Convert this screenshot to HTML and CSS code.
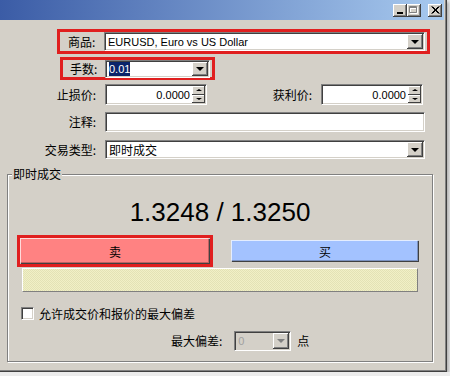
FILE: index.html
```html
<!DOCTYPE html>
<html lang="zh-CN">
	<head>
		<meta charset="UTF-8" />
		<title>新订单</title>
		<link rel="stylesheet" href="styles.css">
	</head>
	<body>
		<div class="window">
			<div class="titlebar">
				<span class="cap-btn">
					<svg width="8" height="8" viewBox="0 0 8 8"><rect x="1" y="6" width="6" height="2" fill="#000"/></svg>
				</span>
				<span class="cap-btn">
					<svg width="10" height="9" viewBox="0 0 10 9"><path d="M1.5 1.5h7v6h-7z M1.5 2.5h7" fill="none" stroke="#fff"/><path d="M0.5 0.5h7v6h-7z M0.5 1.5h7" fill="none" stroke="#808080"/></svg>
				</span>
				<span class="cap-btn close">
					<svg width="9" height="8" viewBox="0 0 9 8"><path d="M0.5 0.5l7 7M1.5 0.5l7 7M7.5 0.5l-7 7M8.5 0.5l-7 7" stroke="#000"/></svg>
				</span>
			</div>

			<div class="client">
				<div class="mark mark-symbol">
					<label class="lbl-inline">商品:</label>
					<div class="field combo symbol-combo">
						<span class="value latin">EURUSD, Euro vs US Dollar</span>
						<span class="drop"><i class="arrow"></i></span>
					</div>
				</div>

				<div class="mark mark-lots">
					<label class="lbl-inline">手数:</label>
					<div class="field combo lots-combo">
						<span class="value latin"><span class="selected">0.01</span></span>
						<span class="drop"><i class="arrow"></i></span>
					</div>
				</div>

				<div class="row row-prices">
					<label class="lbl">止损价:</label>
					<div class="field spin-field">
						<span class="value latin num">0.0000</span>
						<span class="spin"><span class="spin-up"><i class="arrow up"></i></span><span class="spin-down"><i class="arrow small"></i></span></span>
					</div>
					<label class="lbl lbl-tp">获利价:</label>
					<div class="field spin-field">
						<span class="value latin num">0.0000</span>
						<span class="spin"><span class="spin-up"><i class="arrow up"></i></span><span class="spin-down"><i class="arrow small"></i></span></span>
					</div>
				</div>

				<div class="row row-comment">
					<label class="lbl">注释:</label>
					<div class="field full"></div>
				</div>

				<div class="row row-type">
					<label class="lbl">交易类型:</label>
					<div class="field combo full">
						<span class="value">即时成交</span>
						<span class="drop"><i class="arrow"></i></span>
					</div>
				</div>

				<fieldset class="group">
					<legend>即时成交</legend>
					<div class="price">1.3248 / 1.3250</div>

					<div class="trade">
						<div class="mark mark-sell">
							<button class="btn sell">卖</button>
						</div>
						<button class="btn buy">买</button>
					</div>

					<div class="status-bar"></div>

					<div class="check-row">
						<span class="checkbox"></span>
						<span>允许成交价和报价的最大偏差</span>
					</div>

					<div class="dev-row">
						<label>最大偏差:</label>
						<div class="field combo disabled dev-combo">
							<span class="value latin">0</span>
							<span class="drop"><i class="arrow"></i></span>
						</div>
						<span class="unit">点</span>
					</div>
				</fieldset>
			</div>
		</div>
	</body>
</html>
```

FILE: styles.css
```css
* {
	box-sizing: border-box;
}
body {
	margin: 0;
	background: #ececec;
	font-family: "Noto Sans CJK SC", sans-serif;
	font-size: 12px;
	color: #000;
}
.window {
	width: 447px;
	height: 372px;
	padding-right: 3px;
	background: #d4d0c8;
	box-shadow: inset -1px -1px #404040, inset -2px -2px #808080, 2px 2px 3px rgba(0, 0, 0, 0.25);
}
.titlebar {
	height: 20px;
	display: flex;
	align-items: center;
	justify-content: flex-end;
	padding-right: 2px;
	background: linear-gradient(to right, #3b5ca6, #a8caef);
}
.cap-btn {
	width: 14px;
	height: 13px;
	display: flex;
	align-items: center;
	justify-content: center;
	background: #d4d0c8;
	box-shadow: inset -1px -1px #404040, inset 1px 1px #fff, inset -2px -2px #808080;
}
.cap-btn.close {
	margin-left: 7px;
}

/* form rows */
.client {
	padding-top: 9px;
}
.mark {
	border: 3px solid #e01f1f;
	display: flex;
	align-items: center;
}
.mark-symbol {
	margin-left: 57px;
	width: 373px;
	height: 25px;
	padding-left: 8px;
}
.mark-lots {
	margin: 3px 0 0 60px;
	width: 155px;
	height: 23px;
	padding-left: 7px;
}
.lbl-inline {
	line-height: 14px;
}
.row {
	display: flex;
	align-items: center;
}
.lbl {
	width: 96px;
	text-align: right;
	line-height: 14px;
}
.row .field {
	margin-left: 9px;
}
.row-prices {
	margin-top: 4px;
}
.row-comment {
	margin-top: 7px;
}
.row-type {
	margin-top: 8px;
}
.lbl-tp {
	width: 105px;
}

/* sunken edit / combo */
.field {
	height: 20px;
	display: flex;
	align-items: stretch;
	background: #fff;
	border: 1px solid;
	border-color: #808080 #fff #fff #808080;
	box-shadow: inset 1px 1px #404040, inset -1px -1px #d4d0c8;
	padding: 2px;
}
.value {
	flex: 1;
	display: flex;
	align-items: center;
	padding-left: 1px;
	white-space: nowrap;
}
.latin {
	font-family: "Liberation Sans", Arial, sans-serif;
	font-size: 11px;
}
.num {
	justify-content: flex-end;
	padding-right: 2px;
}
.selected {
	background: #0a246a;
	color: #fff;
	padding: 1px 0;
}
.symbol-combo {
	margin-left: auto;
	margin-right: 2px;
	width: 321px;
	height: 19px;
}
.lots-combo {
	margin-left: auto;
	margin-right: 2px;
	width: 105px;
	height: 18px;
}
.full {
	width: 320px;
}
.row-type .field {
	height: 19px;
}
.drop {
	width: 16px;
	margin: -1px -1px -1px 0;
	display: flex;
	align-items: center;
	justify-content: center;
	background: #d4d0c8;
	box-shadow: inset -1px -1px #404040, inset 1px 1px #fff, inset -2px -2px #808080;
}
.arrow {
	width: 0;
	height: 0;
	border-left: 4px solid transparent;
	border-right: 4px solid transparent;
	border-top: 4px solid #000;
}
.arrow.small {
	border-left-width: 3px;
	border-right-width: 3px;
	border-top-width: 2px;
}
.arrow.up {
	border-left: 3px solid transparent;
	border-right: 3px solid transparent;
	border-top: 0;
	border-bottom: 2px solid #000;
}

/* spin edit */
.spin-field {
	width: 102px;
	height: 21px;
}
.spin {
	width: 13px;
	margin: -1px -1px -1px 0;
	display: flex;
	flex-direction: column;
}
.spin-up,
.spin-down {
	flex: 1;
	display: flex;
	align-items: center;
	justify-content: center;
	background: #d4d0c8;
	box-shadow: inset -1px -1px #404040, inset 1px 1px #fff;
}

/* group */
.group {
	margin: 8px 0 0 7px;
	width: 426px;
	padding: 0 0 10px 0;
	border: 1px solid #808080;
	box-shadow: 1px 1px #fff, inset 1px 1px #fff;
}
.group legend {
	margin-left: 4px;
	padding: 0 1px;
	line-height: 14px;
	background: #d4d0c8;
}
.price {
	margin-top: 15px;
	text-align: center;
	font-family: "Liberation Sans", Arial, sans-serif;
	font-size: 26px;
	line-height: 32px;
}
.trade {
	display: flex;
	align-items: center;
	margin-top: 7px;
	padding-left: 9px;
}
.mark-sell {
	width: 196px;
	height: 32px;
}
.btn {
	font-family: "Noto Sans CJK SC", sans-serif;
	font-size: 12px;
	color: #000;
	border: none;
	padding: 0;
	box-shadow: inset 1px 1px rgba(255, 255, 255, 0.7), inset -1px -1px #404040, inset -2px -2px rgba(0, 0, 0, 0.25);
}
.sell {
	width: 190px;
	height: 26px;
	background: #ff8282;
}
.buy {
	margin-left: 18px;
	width: 188px;
	height: 22px;
	background: #a3c2ff;
}
.status-bar {
	margin: 1px 0 0 14px;
	width: 396px;
	height: 24px;
	border: 1px solid;
	border-color: #fff #808080 #808080 #fff;
	background: repeating-conic-gradient(#f1f0c6 0 25%, #e3e2b5 0 50%) 0 0 / 2px 2px;
}
.check-row {
	display: flex;
	align-items: center;
	margin-top: 15px;
	padding-left: 13px;
	height: 13px;
	line-height: 14px;
}
.checkbox {
	width: 13px;
	height: 13px;
	margin-right: 5px;
	background: #fff;
	border: 1px solid;
	border-color: #808080 #fff #fff #808080;
	box-shadow: inset 1px 1px #404040, inset -1px -1px #d4d0c8;
}
.dev-row {
	display: flex;
	align-items: center;
	margin-top: 11px;
	padding-left: 163px;
	line-height: 14px;
}
.dev-combo {
	margin-left: 12px;
	width: 57px;
}
.disabled {
	background: #d4d0c8;
	color: #a0a0a0;
}
.disabled .arrow {
	border-top-color: #808080;
}
.unit {
	margin-left: 6px;
}
```
